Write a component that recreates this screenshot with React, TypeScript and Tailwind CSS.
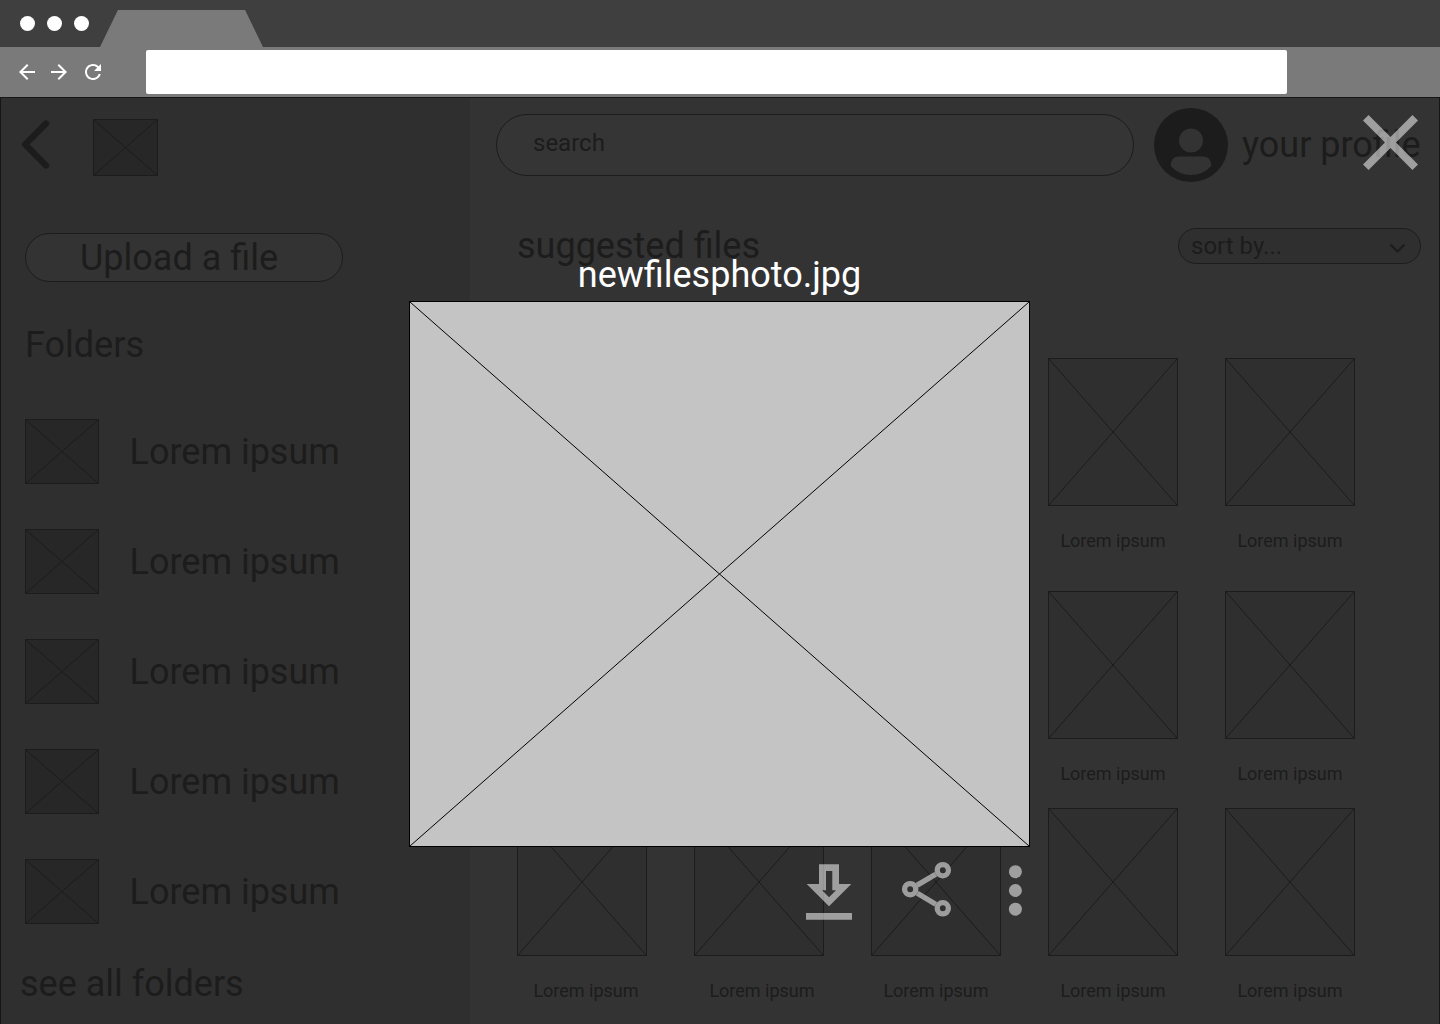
import React from "react";
import { MdArrowBack, MdArrowForward, MdRefresh } from "react-icons/md";

function Placeholder({ className }: { className: string }) {
  return (
    <div className={`border ${className}`}>
      <svg className="block h-full w-full" preserveAspectRatio="none" viewBox="0 0 100 100" fill="none" stroke="currentColor">
        <path d="M0 0L100 100M100 0L0 100" vectorEffect="non-scaling-stroke" />
      </svg>
    </div>
  );
}

function BrowserChrome() {
  return (
    <header className="shrink-0">
      <div className="flex h-[47px] items-end bg-[#3f3f3f] pl-5">
        <div className="mb-4 flex gap-3">
          <span className="size-[15px] rounded-full bg-white" />
          <span className="size-[15px] rounded-full bg-white" />
          <span className="size-[15px] rounded-full bg-white" />
        </div>
        <div className="ml-[11px] h-[37px] w-[163px] bg-[#7a7a7a] [clip-path:polygon(11%_0,89%_0,100%_100%,0_100%)]" />
      </div>
      <div className="flex h-[50px] items-center bg-[#7a7a7a] pl-[15px] text-white">
        <MdArrowBack size={24} />
        <MdArrowForward size={24} className="ml-2" />
        <MdRefresh size={24} className="ml-[10px]" />
        <div className="ml-[41px] h-11 w-[1141px] rounded-[2px] bg-white" />
      </div>
    </header>
  );
}

function Sidebar() {
  return (
    <aside className="w-[469px] shrink-0 bg-[#2f2f2f] text-4xl/[42px]">
      <div className="flex items-start pt-[21px] pl-5">
        <svg width="32" height="52" viewBox="0 0 32 52" fill="none" stroke="currentColor" strokeWidth="6.4" strokeLinecap="round" strokeLinejoin="round">
          <path d="M25 4.6L4.2 25.5L25 46.4" />
        </svg>
        <Placeholder className="ml-10 h-[57px] w-[65px] bg-[#272727]" />
      </div>
      <button className="mt-[57px] ml-6 block h-[49px] w-[318px] rounded-full border bg-[#333333] pr-[10px] text-center">
        Upload a file
      </button>
      <h2 className="mt-[42px] ml-6">Folders</h2>
      <div className="mt-[53px] ml-6 flex flex-col gap-[45px]">
        {[1, 2, 3, 4, 5].map((n) => (
          <div key={n} className="flex h-[65px] items-center">
            <Placeholder className="h-[65px] w-[74px] bg-[#272727]" />
            <span className="ml-[30.5px]">Lorem ipsum</span>
          </div>
        ))}
      </div>
      <p className="mt-[39px] ml-[19px]">see all folders</p>
    </aside>
  );
}

const labelShift = ["pl-[8px]", "pl-[6px]", "", "", ""];

function FileRow({ className, shifted }: { className: string; shifted?: boolean }) {
  return (
    <div className={`flex gap-[47px] ${className}`}>
      {labelShift.map((shift, i) => (
        <div key={i} className="w-[130px]">
          <Placeholder className="h-[148px] bg-[#2f2f2f]" />
          <p className={`mt-6 text-center text-lg/[21px] ${shifted ? shift : ""}`}>Lorem ipsum</p>
        </div>
      ))}
    </div>
  );
}

function Content() {
  return (
    <main className="min-w-0 flex-1 overflow-hidden">
      <div className="flex h-[94px] items-center pl-[26px]">
        <div className="h-[62px] w-[638px] shrink-0 rounded-full border bg-[#353535] pt-[14px] pl-9 text-2xl/[28px]">search</div>
        <svg className="ml-5 shrink-0" width="74" height="74" viewBox="0 0 74 74">
          <circle cx="37" cy="37" r="37" fill="currentColor" />
          <circle cx="37" cy="32.6" r="12" fill="#333" />
          <path d="M25 48.6H49Q57 48.6 57.3 58Q49 67 37 67Q25 67 16.7 58Q17 48.6 25 48.6Z" fill="#333" />
        </svg>
        <span className="ml-[14px] whitespace-nowrap text-4xl/[42px]">your profile</span>
      </div>
      <div className="mt-[33px] flex items-start justify-between pr-[18px] pl-[47px]">
        <h1 className="text-4xl/[42px]">suggested files</h1>
        <div className="mt-[3px] flex h-9 w-[243px] items-center justify-between rounded-full border bg-[#2f2f2f] pr-[14px] pl-3 text-2xl/[28px]">
          sort by...
          <svg width="18" height="12" viewBox="0 0 18 12" fill="none" stroke="currentColor" strokeWidth="2" overflow="visible">
            <path d="M2.5 4.5L9.5 11.5L16.5 4.5" />
          </svg>
        </div>
      </div>
      <div className="pl-[47px]">
        <FileRow className="mt-[91px]" />
        <FileRow className="mt-10" />
        <FileRow className="mt-6" shifted />
      </div>
    </main>
  );
}

function Preview() {
  return (
    <div className="absolute inset-0">
      <svg className="absolute top-[18px] left-[1363px] text-white/53" width="55" height="55" viewBox="5 5 14 14" fill="currentColor">
        <path d="M19 6.41L17.59 5 12 10.59 6.41 5 5 6.41 10.59 12 5 17.59 6.41 19 12 13.41 17.59 19 19 17.59 13.41 12z" />
      </svg>
      <div className="ml-[409px] flex w-[621px] flex-col pt-[157px]">
        <h2 className="text-center text-4xl/[42px] text-white">newfilesphoto.jpg</h2>
        <Placeholder className="mt-[5px] h-[546px] border-black bg-[#c4c4c4] text-black" />
        <div className="mt-[14px] flex text-white/53">
          <svg className="ml-[397px] shrink-0" width="46" height="60" viewBox="806 861 46 60" fill="currentColor" fillRule="evenodd">
            <path d="M819 864.2H839V884H851.3L829 906.3L806.7 884H819ZM826 871V890.3H822.2L829 897.3L836 890.3H832.3V871ZM806 913H852V919.8H806Z" />
          </svg>
          <svg className="ml-[49px] shrink-0" width="52" height="60" viewBox="901 861 52 60" fill="none" stroke="currentColor">
            <g strokeWidth="5.3">
              <circle cx="910.2" cy="889.2" r="5.6" />
              <circle cx="942.8" cy="870.2" r="5.6" />
              <circle cx="942.8" cy="908.3" r="5.6" />
              <path d="M917.3 885.1L935.7 874.3M917.3 893.3L935.7 904.2" />
            </g>
          </svg>
          <svg className="ml-[54px] shrink-0" width="16" height="60" viewBox="1007 861 16 60" fill="currentColor">
            <circle cx="1015.4" cy="871.7" r="6.5" />
            <circle cx="1015.4" cy="890.5" r="6.5" />
            <circle cx="1015.4" cy="909.2" r="6.5" />
          </svg>
        </div>
      </div>
    </div>
  );
}

export default function App() {
  return (
    <div className="flex h-[1024px] w-[1440px] flex-col overflow-hidden font-[Roboto,sans-serif]">
      <BrowserChrome />
      <div className="relative flex min-h-0 flex-1 overflow-hidden bg-[#333333]">
        <div className="flex w-full border-x border-t border-[#161616] text-[#1c1c1c]">
          <Sidebar />
          <Content />
        </div>
        <Preview />
      </div>
    </div>
  );
}
